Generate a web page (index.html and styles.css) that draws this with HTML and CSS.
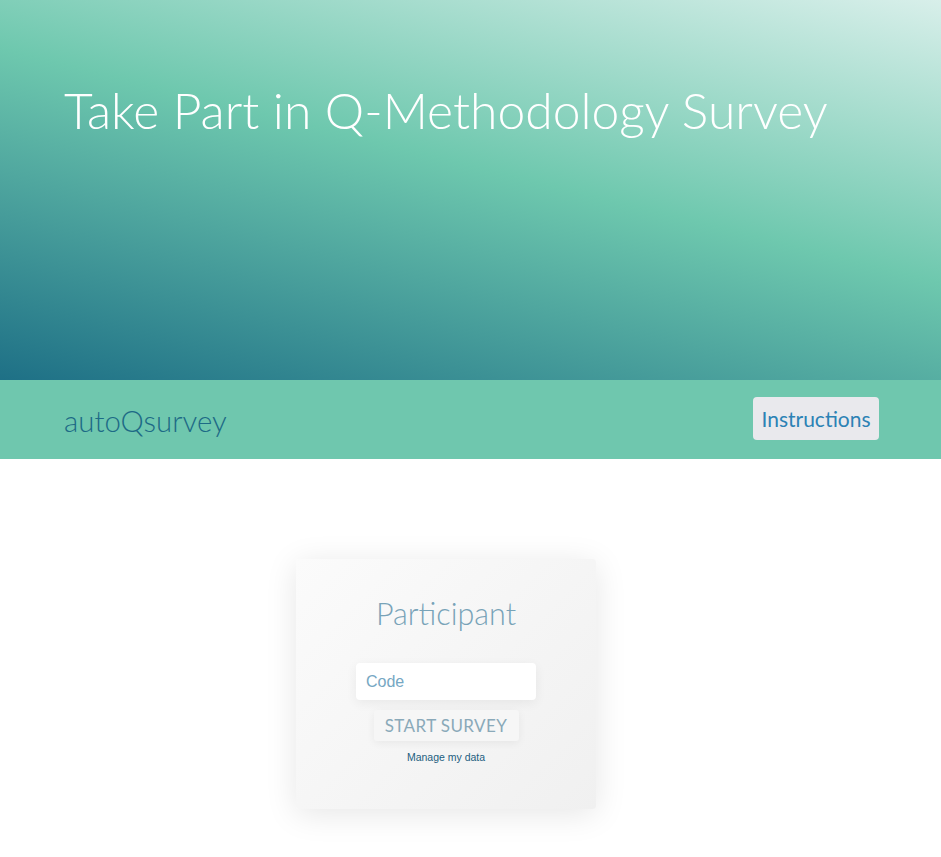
FILE: index.html
```html
<!DOCTYPE html>
<html>
<head>
<meta charset="utf-8">
<link rel="stylesheet" href="styles.css">
</head>
<body>
<header class="hero">
  <h1 class="hero-title">Take Part in Q-Methodology Survey</h1>
</header>
<nav class="navbar">
  <span class="brand">autoQsurvey</span>
  <button class="nav-btn">Instructions</button>
</nav>
<main class="main">
  <div class="card">
    <h2 class="card-title">Participant</h2>
    <input class="code-input" type="text" placeholder="Code">
    <button class="start-btn">START SURVEY</button>
    <a class="manage-link" href="#">Manage my data</a>
  </div>
</main>
</body>
</html>
```

FILE: styles.css
```css
html, body {
  margin: 0;
  padding: 0;
  background: #ffffff;
}
body {
  font-family: "Lato", "Liberation Sans", sans-serif;
}
.hero {
  height: 380px;
  box-sizing: border-box;
  padding: 78px 0 0 64px;
  background: linear-gradient(14deg, #1e7086 0%, #6ec8ae 54%, #d8efea 100%);
}
.hero-title {
  margin: 0;
  font-family: "Lato", sans-serif;
  font-weight: 300;
  font-size: 49.8px;
  line-height: 64px;
  color: #ffffff;
}
.navbar {
  height: 79px;
  background: #6fc7ae;
  display: flex;
  align-items: center;
  justify-content: space-between;
  padding: 0 62px 0 64px;
}
.brand {
  font-family: "Lato", sans-serif;
  font-weight: 300;
  font-size: 29.4px;
  color: #1d6a86;
  margin-top: 1px;
}
.nav-btn {
  background: #e9e9ed;
  border: none;
  border-radius: 4px;
  height: 43px;
  width: 126px;
  padding: 0;
  font-family: "Lato", sans-serif;
  font-size: 21px;
  color: #2c82b5;
  margin-top: -2px;
}
.main {
  display: flex;
  justify-content: flex-start;
  padding-top: 100px;
  padding-left: 296px;
  padding-bottom: 40px;
}
.card {
  width: 300px;
  height: 250px;
  box-sizing: border-box;
  background: linear-gradient(135deg, #fbfbfb 0%, #f0f0f0 100%);
  border-radius: 3px;
  box-shadow: 0 5px 32px rgba(0, 0, 0, 0.10);
  display: flex;
  flex-direction: column;
  align-items: center;
  padding-top: 36px;
}
.card-title {
  margin: 0;
  font-family: "Lato", sans-serif;
  font-weight: 300;
  font-size: 30.5px;
  line-height: 36px;
  color: #78a3b8;
}
.code-input {
  margin-top: 32px;
  width: 180px;
  height: 37px;
  box-sizing: border-box;
  border: none;
  border-radius: 4px;
  background: #ffffff;
  padding: 0 10px;
  font-family: "Liberation Sans", Arial, sans-serif;
  font-size: 16px;
  color: #333;
  box-shadow: 0 3px 12px rgba(0, 0, 0, 0.06);
  outline: none;
}
.code-input::placeholder {
  color: #76a7c3;
}
.start-btn {
  margin-top: 10px;
  width: 145px;
  height: 31px;
  border: none;
  border-radius: 3px;
  background: #f6f6f6;
  box-shadow: 0 2px 8px rgba(0, 0, 0, 0.06);
  font-family: "Lato", sans-serif;
  font-size: 17px;
  color: #8aa9b9;
  padding: 0;
  letter-spacing: 0.4px;
}
.manage-link {
  margin-top: 10px;
  font-family: "Liberation Sans", Arial, sans-serif;
  font-size: 10.5px;
  color: #1d5e80;
  text-decoration: none;
}
```
